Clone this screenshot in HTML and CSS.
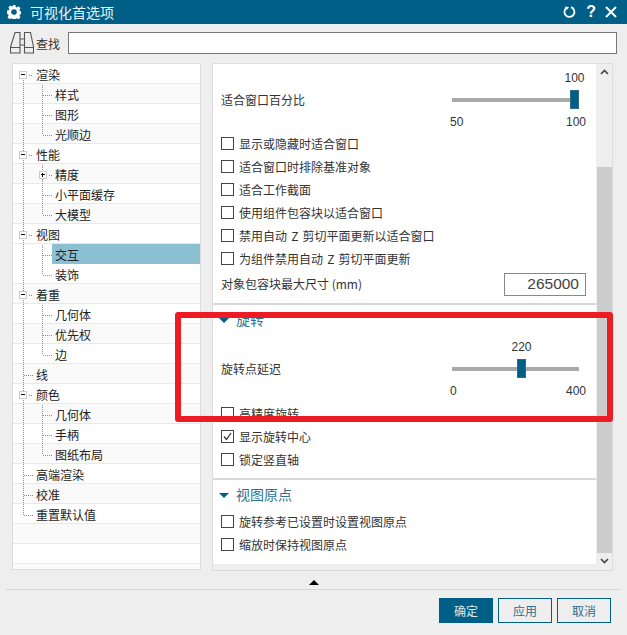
FILE: index.html
```html
<!DOCTYPE html>
<html lang="zh-CN">
<head>
<meta charset="utf-8">
<title>可视化首选项</title>
<link rel="stylesheet" href="styles.css">
</head>
<body>
<div class="dialog">
  <header class="titlebar">
    <svg class="gear" viewBox="0 0 14 14" width="14" height="14"><path fill="#fff" fill-rule="evenodd" d="M5.600 0h2.800l.3 1.900 1.200.5 1.600-1.100 2 2-1.100 1.600.5 1.200 1.900.3v2.800l-1.900.3-.5 1.200 1.100 1.600-2 2-1.600-1.100-1.200.5-.3 1.900H5.600l-.3-1.900-1.200-.5-1.600 1.100-2-2 1.100-1.600-.5-1.200L0 8.400V5.600l1.900-.3.5-1.200-1.100-1.600 2-2 1.600 1.100 1.200-.5zM7 4.200a2.800 2.800 0 1 0 0 5.600 2.800 2.800 0 0 0 0-5.600z"/></svg>
    <span class="title">可视化首选项</span>
    <span class="window-tools">
      <svg viewBox="0 0 14 14" width="14" height="14"><path fill="none" stroke="#fff" stroke-width="1.800" d="M3.600 2.800A5 5 0 1 0 8 2.200"/><path fill="#fff" d="M2 1.500l4 .4-2.300 3.300z"/></svg>
      <span class="help">?</span>
      <svg viewBox="0 0 12 12" width="12" height="12"><path stroke="#fff" stroke-width="2" d="M1 1l10 10M11 1L1 11"/></svg>
    </span>
  </header>

  <div class="search">
    <svg class="binoculars" viewBox="0 0 24 22" width="24" height="22"><path fill="none" stroke="#555" stroke-width="1.100" d="M5 .5h5V21H.5v-6zM15 .5h5.500L23.500 15v6h-9V.5zM10 7h4.500M10 13h4.500M.5 15.500H10M14.500 15.500h9"/></svg>
    <span class="search-label">查找</span>
    <input class="search-input" type="text">
  </div>

  <div class="panes">
    <nav class="tree">
      <svg class="tree-lines" width="186" height="505">
        <path fill="none" stroke="#8f8f8f" stroke-dasharray="1 1" d="M10.500 16V451M29.500 21V71M29.500 101V151M29.500 181V211M29.500 241V291M29.500 341V391M16 11.500h4M30 31.500h9M30 51.500h9M30 71.500h9M16 91.500h4M36 111.500h3M30 131.500h9M30 151.500h9M16 171.500h4M30 191.500h9M30 211.500h9M16 231.500h4M30 251.500h9M30 271.500h9M30 291.500h9M11 311.500h9M16 331.500h4M30 351.500h9M30 371.500h9M30 391.500h9M11 411.500h9M11 431.500h9M11 451.500h9"/>
      </svg>
      <div class="node"><i class="toggle minus"></i>渲染</div>
      <div class="node sub">样式</div>
      <div class="node sub">图形</div>
      <div class="node sub">光顺边</div>
      <div class="node"><i class="toggle minus"></i>性能</div>
      <div class="node sub"><i class="toggle plus"></i>精度</div>
      <div class="node sub">小平面缓存</div>
      <div class="node sub">大模型</div>
      <div class="node"><i class="toggle minus"></i>视图</div>
      <div class="node sub selected"><span>交互</span></div>
      <div class="node sub">装饰</div>
      <div class="node"><i class="toggle minus"></i>着重</div>
      <div class="node sub">几何体</div>
      <div class="node sub">优先权</div>
      <div class="node sub">边</div>
      <div class="node">线</div>
      <div class="node"><i class="toggle minus"></i>颜色</div>
      <div class="node sub">几何体</div>
      <div class="node sub">手柄</div>
      <div class="node sub">图纸布局</div>
      <div class="node">高端渲染</div>
      <div class="node">校准</div>
      <div class="node">重置默认值</div>
      <div class="node"></div>
      <div class="node"></div>
      <div class="node"></div>
    </nav>

    <div class="settings">
      <div class="sections">
        <section class="section fit">
          <div class="slider-row">
            <span>适合窗口百分比</span>
            <div class="slider">
              <div class="track"><b class="thumb" style="left:118px"><em>100</em></b></div>
              <div class="ends"><span>50</span><span>100</span></div>
            </div>
          </div>
          <label class="check"><i class="box"></i>显示或隐藏时适合窗口</label>
          <label class="check"><i class="box"></i>适合窗口时排除基准对象</label>
          <label class="check"><i class="box"></i>适合工作截面</label>
          <label class="check"><i class="box"></i>使用组件包容块以适合窗口</label>
          <label class="check"><i class="box"></i>禁用自动 Z 剪切平面更新以适合窗口</label>
          <label class="check"><i class="box"></i>为组件禁用自动 Z 剪切平面更新</label>
          <div class="size-row">
            <span>对象包容块最大尺寸 (mm)</span>
            <input class="size-input" type="text" value="265000">
          </div>
        </section>

        <section class="section rotate">
          <h3 class="heading">旋转</h3>
          <div class="slider-row spaced">
            <span>旋转点延迟</span>
            <div class="slider">
              <div class="track"><b class="thumb" style="left:65px"><em>220</em></b></div>
              <div class="ends"><span>0</span><span>400</span></div>
            </div>
          </div>
          <label class="check first"><i class="box"></i>高精度旋转</label>
          <label class="check"><i class="box checked"><svg viewBox="0 0 11 11" width="11" height="11"><path fill="none" stroke="#333" stroke-width="1.300" d="M2 5.500l2.500 3L9 2"/></svg></i>显示旋转中心</label>
          <label class="check"><i class="box"></i>锁定竖直轴</label>
        </section>

        <section class="section origin">
          <h3 class="heading">视图原点</h3>
          <label class="check first"><i class="box"></i>旋转参考已设置时设置视图原点</label>
          <label class="check"><i class="box"></i>缩放时保持视图原点</label>
        </section>
      </div>

      <div class="scrollbar">
        <svg class="arrow" viewBox="0 0 9 6" width="9" height="6"><path fill="none" stroke="#444" stroke-width="1.600" d="M1 5l3.500-3.500L8 5"/></svg>
        <div class="scroll-thumb"></div>
        <svg class="arrow" viewBox="0 0 9 6" width="9" height="6"><path fill="none" stroke="#444" stroke-width="1.600" d="M1 1l3.500 3.500L8 1"/></svg>
      </div>
    </div>
  </div>

  <div class="collapse"><i class="collapse-arrow"></i></div>

  <footer class="actions">
    <button class="btn primary">确定</button>
    <button class="btn">应用</button>
    <button class="btn">取消</button>
  </footer>

  <div class="callout"></div>
</div>
</body>
</html>
```
FILE: styles.css
```css
* { box-sizing: border-box; }

html, body {
  margin: 0;
  height: 100%;
  overflow: hidden;
}

body {
  font-family: "Noto Sans CJK SC", "Liberation Sans", sans-serif;
  font-size: 12px;
  color: #333;
  background: #eee;
}

.dialog {
  position: relative;
  width: 627px;
  height: 635px;
  background: #eee;
}

/* Title bar */
.titlebar {
  display: flex;
  align-items: center;
  height: 24px;
  padding: 0 7px;
  background: #005f87;
  color: #fff;
}

.title {
  margin-left: 9px;
  font-size: 14px;
  color: #eaf3f7;
}

.window-tools {
  display: flex;
  align-items: center;
  gap: 9px;
  margin-left: auto;
  margin-right: 3px;
}

.help {
  font: bold 16px "Liberation Sans", sans-serif;
}

/* Search row */
.search {
  display: flex;
  align-items: center;
  height: 22px;
  margin-top: 8px;
  padding: 0 10px 0 10px;
}

.binoculars { flex: none; }

.search-label {
  width: 34px;
  padding-left: 2px;
}

.search-input {
  flex: 1;
  height: 22px;
  border: 1px solid #777;
  background: #fff;
  outline: none;
}

/* Main panes */
.panes {
  display: flex;
  height: 508px;
  margin: 9px 14px 0 12px;
  gap: 11px;
}

.tree {
  position: relative;
  flex: none;
  width: 189px;
  height: 507px;
  overflow: hidden;
  background: #fff;
  border: 1px solid #ddd;
}

.tree-lines {
  position: absolute;
  left: 0;
  top: 0;
  z-index: 1;
}

.node {
  position: relative;
  display: flex;
  align-items: center;
  height: 20px;
  padding: 1px 0 0 23px;
  border-bottom: 1px solid #e9e9e9;
  color: #222;
}

.node:nth-child(odd) { background: #fafafa; }

.node.sub { padding-left: 42px; }

.node.selected {
  padding: 0 0 0 39px;
  background: transparent;
  border-bottom: 0;
}

.node.selected span {
  display: flex;
  align-items: center;
  flex: 1;
  height: 20px;
  padding: 1px 0 0 3px;
  background: #8ac0d2;
}

.toggle {
  position: absolute;
  z-index: 2;
  left: 6px;
  top: 7px;
  width: 8px;
  height: 8px;
  background: #fff;
  border: 1px solid #ccc;
}

.node.sub .toggle { left: 26px; }

.toggle::before {
  content: "";
  position: absolute;
  left: 1px;
  top: 2px;
  width: 4px;
  height: 1px;
  background: #000;
}

.toggle.plus::after {
  content: "";
  position: absolute;
  left: 2px;
  top: 1px;
  width: 1px;
  height: 4px;
  background: #000;
}

/* Settings pane */
.settings {
  display: flex;
  flex: 1;
  background: #eee;
  border: 1px solid #ddd;
  border-bottom-color: #d8d8d8;
}

.sections {
  flex: 1;
  min-width: 0;
}

.section {
  padding-left: 8px;
  padding-right: 10px;
  background: #fff;
  border-bottom: 2px solid #d8d8d8;
}

.fit { height: 241px; padding-top: 6px; }
.rotate { height: 175px; padding-top: 5px; }
.origin { height: 84px; padding-top: 5px; border-bottom: 0; }

.heading {
  display: flex;
  align-items: center;
  height: 18px;
  margin: 0 0 0 -1px;
  font-size: 14px;
  font-weight: 400;
  color: #2c7390;
}

.heading::before {
  content: "";
  width: 0;
  height: 0;
  margin: 3px 7px 0 -1px;
  border-left: 5px solid transparent;
  border-right: 5px solid transparent;
  border-top: 5px solid #005f87;
}

.slider-row {
  display: flex;
  align-items: center;
  justify-content: space-between;
  height: 62px;
}

.slider-row > span { margin-bottom: 3px; }

.slider-row.spaced { margin-top: 11px; }

.slider {
  width: 134px;
  height: 62px;
  padding-top: 28px;
}

.track {
  position: relative;
  width: 127px;
  height: 4px;
  background: #aaa;
}

.thumb {
  position: absolute;
  top: -8px;
  width: 9px;
  height: 19px;
  background: #005f87;
  border: 1px solid #2f6c86;
}

.thumb em {
  position: absolute;
  left: 50%;
  top: -20px;
  transform: translateX(-50%);
  font: 12px "Liberation Sans", sans-serif;
  line-height: 14px;
  color: #333;
}

.ends {
  display: flex;
  justify-content: space-between;
  margin: 13px 0 0 -2px;
  font-family: "Liberation Sans", sans-serif;
  line-height: 14px;
}

.check {
  display: flex;
  align-items: center;
  height: 23px;
  word-spacing: 1.5px;
}

.rotate .check.first { margin-top: 1px; }
.origin .check.first { margin-top: 7px; }

.box {
  flex: none;
  display: flex;
  align-items: center;
  justify-content: center;
  width: 13px;
  height: 13px;
  margin-right: 5px;
  background: #fff;
  border: 1px solid #444;
}

.size-row {
  display: flex;
  align-items: center;
  justify-content: space-between;
  height: 24px;
  margin-top: 2px;
}

.size-row > span { margin-bottom: 2px; }

.size-input {
  width: 82px;
  height: 23px;
  padding: 0 6px;
  border: 1px solid #888;
  background: #fff;
  font: 15.5px "Liberation Sans", sans-serif;
  color: #444;
  text-align: right;
  outline: none;
}

/* Scrollbar */
.scrollbar {
  display: flex;
  flex-direction: column;
  align-items: center;
  flex: none;
  width: 15px;
  margin-left: 1px;
  background: #eee;
}

.arrow { flex: none; margin-top: 5px; }

.scroll-thumb {
  flex: none;
  width: 100%;
  height: 386px;
  margin-top: 92px;
  background: #ccc;
}

.scroll-thumb + .arrow { margin-top: 5px; }

/* Collapse handle */
.collapse {
  display: flex;
  justify-content: center;
  height: 19px;
  margin: 0 6px;
  padding-top: 9px;
  border-bottom: 1px solid #d6d6d6;
}

.collapse-arrow {
  width: 0;
  height: 0;
  border-left: 5px solid transparent;
  border-right: 5px solid transparent;
  border-bottom: 5px solid #000;
}

/* Dialog buttons */
.actions {
  display: flex;
  justify-content: flex-end;
  gap: 5px;
  margin-top: 8px;
  padding-right: 16px;
}

.btn {
  width: 54px;
  height: 25px;
  padding: 0;
  border: 1px solid #005f87;
  background: #eee;
  font: 12px "Noto Sans CJK SC", sans-serif;
  color: #2c6f8c;
}

.btn.primary {
  background: #005f87;
  color: #dbe9ef;
}

/* Red highlight frame drawn on top of the dialog */
.callout {
  position: absolute;
  z-index: 3;
  left: 175px;
  top: 312px;
  width: 438px;
  height: 110px;
  border: 6px solid #ed1c24;
  border-radius: 3px;
  pointer-events: none;
}
```
